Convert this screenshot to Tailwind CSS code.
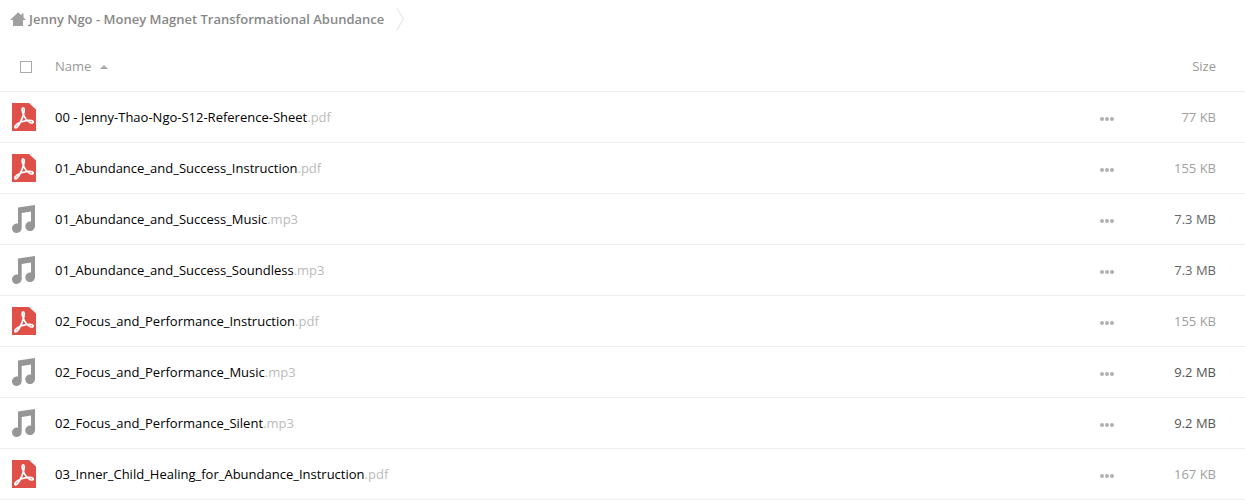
<!DOCTYPE html>
<html lang="en">
<head>
    <meta charset="UTF-8">
    <title>Files</title>
    <script src="https://cdn.jsdelivr.net/npm/@tailwindcss/browser@4"></script>
</head>
<body class="bg-white text-[13px] leading-5 text-black font-['Open_Sans',sans-serif]">
    <!-- icons -->
    <svg class="hidden">
        <symbol id="pdf" viewBox="0 0 24 28">
            <path fill="#de5048" d="M0 0h17l7 6.500V28H0z"/>
            <path fill="none" stroke="#fff" stroke-width="1.700" stroke-linejoin="round" d="M11.200 4.800c-1.500 0-1.300 2.700-.3 5.400 1.300 3.700 4.200 7.900 7.600 9.500 1.600.7 2.900.1 2.700-.9-.3-1.300-3.400-1.600-6.700-1.200-3.400.4-6.700 1.500-9.200 3.300-2 1.400-2.900 3-2.200 3.800.9.900 2.800-1.100 4.600-4.200 1.600-2.800 3.100-6.400 3.900-9.700.7-2.900 1-6-.4-6z"/>
        </symbol>
        <symbol id="music" viewBox="0 0 24 28">
            <path fill="#969696" d="M6 2.500 23 0v21c0 2.900-2.100 5-5 5-2.700 0-4.700-1.900-4.700-4.500 0-2.800 2.300-4.900 5-4.900.4 0 .5 0 .7.100V6.500L9.700 8v14.800c0 3-2.200 5.200-5 5.200C2 28 0 26.100 0 23.500c0-2.800 2.300-5 5-5 .4 0 .7 0 1 .1z"/>
        </symbol>
        <symbol id="dots" viewBox="0 0 14 4">
            <g fill="#b0b0b0"><circle cx="2" cy="2" r="2"/><circle cx="7" cy="2" r="2"/><circle cx="12" cy="2" r="2"/></g>
        </symbol>
    </svg>

    <nav class="flex items-center h-10 pb-[2px] pl-[10px]">
        <a href="#" aria-label="Home">
            <svg class="w-4 h-4" viewBox="0 0 16 16"><path fill="#a0a0a0" d="M8 1.500 0 9h3v6h10V9h3l-2.500-2.500V2.500h-2v2L8.500 1.500z"/></svg>
        </a>
        <a href="#" class="ml-[3px] font-semibold text-[#888]">Jenny Ngo - Money Magnet Transformational Abundance</a>
        <svg class="ml-3 w-2 h-6" viewBox="0 0 8 24"><path fill="none" stroke="#e0e0e0" d="m.5.500 7 11.500-7 11.500"/></svg>
    </nav>

    <table class="w-full table-fixed border-collapse">
        <thead>
            <tr class="h-[51px] border-b border-[#eee] text-[#999]">
                <th class="w-[55px] pl-5 pt-1 text-left">
                    <input type="checkbox" aria-label="Select all" class="block appearance-none w-3 h-3 border border-[#aaa] bg-white">
                </th>
                <th class="pt-[2px] text-left font-normal">
                    <button type="button" class="flex items-center gap-[9px]">Name
                        <svg class="mt-[2px] w-2 h-1" viewBox="0 0 8 4"><path fill="#aaa" d="M4 0 8 4H0z"/></svg>
                    </button>
                </th>
                <th class="w-[60px]"></th>
                <th class="w-[102px] pt-[2px] pr-[29px] text-right font-normal"><button type="button">Size</button></th>
            </tr>
        </thead>
        <tbody>
            <tr class="h-[51px] border-b border-[#eee]">
                <td class="pl-3"><svg class="w-6 h-7"><use href="#pdf"/></svg></td>
                <td><a href="#">00 - Jenny-Thao-Ngo-S12-Reference-Sheet<span class="text-[#bbb]">.pdf</span></a></td>
                <td><button type="button" aria-label="Actions" class="block ml-[17px] pt-1"><svg class="w-[14px] h-1"><use href="#dots"/></svg></button></td>
                <td class="pr-[29px] text-right text-[#a0a0a0]">77 KB</td>
            </tr>
            <tr class="h-[51px] border-b border-[#eee]">
                <td class="pl-3"><svg class="w-6 h-7"><use href="#pdf"/></svg></td>
                <td><a href="#">01_Abundance_and_Success_Instruction<span class="text-[#bbb]">.pdf</span></a></td>
                <td><button type="button" aria-label="Actions" class="block ml-[17px] pt-1"><svg class="w-[14px] h-1"><use href="#dots"/></svg></button></td>
                <td class="pr-[29px] text-right text-[#a0a0a0]">155 KB</td>
            </tr>
            <tr class="h-[51px] border-b border-[#eee]">
                <td class="pl-3"><svg class="w-6 h-7"><use href="#music"/></svg></td>
                <td><a href="#">01_Abundance_and_Success_Music<span class="text-[#bbb]">.mp3</span></a></td>
                <td><button type="button" aria-label="Actions" class="block ml-[17px] pt-1"><svg class="w-[14px] h-1"><use href="#dots"/></svg></button></td>
                <td class="pr-[29px] text-right text-[#666]">7.3 MB</td>
            </tr>
            <tr class="h-[51px] border-b border-[#eee]">
                <td class="pl-3"><svg class="w-6 h-7"><use href="#music"/></svg></td>
                <td><a href="#">01_Abundance_and_Success_Soundless<span class="text-[#bbb]">.mp3</span></a></td>
                <td><button type="button" aria-label="Actions" class="block ml-[17px] pt-1"><svg class="w-[14px] h-1"><use href="#dots"/></svg></button></td>
                <td class="pr-[29px] text-right text-[#666]">7.3 MB</td>
            </tr>
            <tr class="h-[51px] border-b border-[#eee]">
                <td class="pl-3"><svg class="w-6 h-7"><use href="#pdf"/></svg></td>
                <td><a href="#">02_Focus_and_Performance_Instruction<span class="text-[#bbb]">.pdf</span></a></td>
                <td><button type="button" aria-label="Actions" class="block ml-[17px] pt-1"><svg class="w-[14px] h-1"><use href="#dots"/></svg></button></td>
                <td class="pr-[29px] text-right text-[#a0a0a0]">155 KB</td>
            </tr>
            <tr class="h-[51px] border-b border-[#eee]">
                <td class="pl-3"><svg class="w-6 h-7"><use href="#music"/></svg></td>
                <td><a href="#">02_Focus_and_Performance_Music<span class="text-[#bbb]">.mp3</span></a></td>
                <td><button type="button" aria-label="Actions" class="block ml-[17px] pt-1"><svg class="w-[14px] h-1"><use href="#dots"/></svg></button></td>
                <td class="pr-[29px] text-right text-[#555]">9.2 MB</td>
            </tr>
            <tr class="h-[51px] border-b border-[#eee]">
                <td class="pl-3"><svg class="w-6 h-7"><use href="#music"/></svg></td>
                <td><a href="#">02_Focus_and_Performance_Silent<span class="text-[#bbb]">.mp3</span></a></td>
                <td><button type="button" aria-label="Actions" class="block ml-[17px] pt-1"><svg class="w-[14px] h-1"><use href="#dots"/></svg></button></td>
                <td class="pr-[29px] text-right text-[#555]">9.2 MB</td>
            </tr>
            <tr class="h-[51px] border-b border-[#eee]">
                <td class="pl-3"><svg class="w-6 h-7"><use href="#pdf"/></svg></td>
                <td><a href="#">03_Inner_Child_Healing_for_Abundance_Instruction<span class="text-[#bbb]">.pdf</span></a></td>
                <td><button type="button" aria-label="Actions" class="block ml-[17px] pt-1"><svg class="w-[14px] h-1"><use href="#dots"/></svg></button></td>
                <td class="pr-[29px] text-right text-[#a0a0a0]">167 KB</td>
            </tr>
        </tbody>
    </table>
</body>
</html>
